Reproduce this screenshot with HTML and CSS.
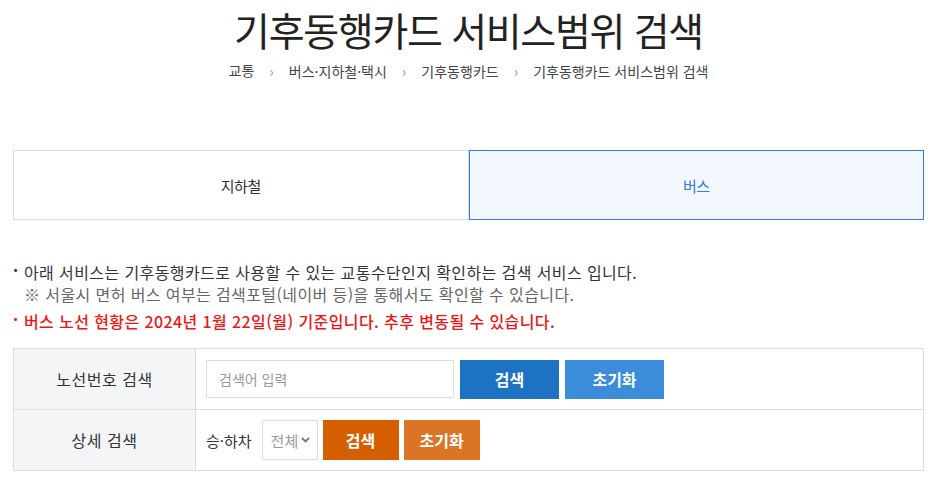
FILE: index.html
```html
<!DOCTYPE html>
<html lang="ko">
<head>
<meta charset="UTF-8">
<title>기후동행카드 서비스범위 검색</title>
<link rel="stylesheet" href="styles.css">
</head>
<body>

<div class="head">
  <h1>기후동행카드 서비스범위 검색</h1>
  <ol class="crumbs">
    <li>교통</li>
    <li>버스·지하철·택시</li>
    <li>기후동행카드</li>
    <li>기후동행카드 서비스범위 검색</li>
  </ol>
</div>

<div class="tabs">
  <button>지하철</button>
  <button class="active">버스</button>
</div>

<ul class="notes">
  <li>아래 서비스는 기후동행카드로 사용할 수 있는 교통수단인지 확인하는 검색 서비스 입니다.</li>
  <li class="sub">※ 서울시 면허 버스 여부는 검색포털(네이버 등)을 통해서도 확인할 수 있습니다.</li>
  <li class="warn">버스 노선 현황은 2024년 1월 22일(월) 기준입니다. 추후 변동될 수 있습니다.</li>
</ul>

<table class="search">
  <tr>
    <th>노선번호 검색</th>
    <td>
      <div class="row">
        <input type="text" placeholder="검색어 입력">
        <button class="btn blue">검색</button>
        <button class="btn sky">초기화</button>
      </div>
    </td>
  </tr>
  <tr>
    <th>상세 검색</th>
    <td>
      <div class="row">
        <span class="lbl">승·하차</span>
        <div class="sel">전체
          <svg width="9" height="6" viewBox="0 0 9 6"><path d="M1 1l3.5 3.5L8 1" fill="none" stroke="#777" stroke-width="1.8"/></svg>
        </div>
        <button class="btn orange">검색</button>
        <button class="btn amber">초기화</button>
      </div>
    </td>
  </tr>
</table>

</body>
</html>
```

FILE: styles.css
```css
body{margin:0;padding:0 13px;font-family:"Noto Sans CJK KR","Noto Sans",sans-serif;color:#333;background:#fff}
.head{text-align:center;padding-top:4px}
h1{margin:0;font-size:39px;font-weight:400;letter-spacing:-1.3px;color:#222;line-height:50px}
.crumbs{list-style:none;margin:6px 0 0;padding:0;display:flex;justify-content:center;font-size:14px;color:#444}
.crumbs li+li::before{content:"›";color:#999;margin:0 15px;font-size:15px}
.tabs{display:flex;margin-top:69px;height:70px}
.tabs button{flex:1;border:1px solid #ddd;background:#fff;font:inherit;font-size:15px;color:#333;cursor:pointer;letter-spacing:-.5px}
.tabs button+button{border-left:none}
.tabs button.active{border:1px solid #2f80e6;background:#f3f8fe;color:#2f7de0}
.notes{list-style:none;margin:40px 0 0;padding:0;font-size:16px;letter-spacing:.4px}
.notes li{padding-left:11px;position:relative;line-height:24px}
.notes li::before{content:"·";position:absolute;left:0;top:-2px;font-weight:700}
.notes li.sub{color:#666;line-height:20px}
.notes li.sub::before{content:none}
.notes li.warn{color:#f01414;margin-top:5px;font-weight:500}
.search{width:100%;border-collapse:collapse;margin-top:15px;border:1px solid #ddd}
.search th{width:181px;background:#f4f5f7;font-weight:400;font-size:16px;letter-spacing:.5px;color:#333;border:1px solid #ddd;height:60px;padding:0}
.search td{border:1px solid #ddd;padding:0 10px}
.row{display:flex;align-items:center;gap:6px}
.row input{width:248px;height:38px;box-sizing:border-box;border:1px solid #ddd;padding:0 12px;font:inherit;font-size:14px}
.row input::placeholder{color:#999}
.btn{height:39px;border:none;color:#fff;font:inherit;font-size:16px;font-weight:700;cursor:pointer}
.blue{width:99px;background:#1e72c4}
.sky{width:99px;background:#3b8cd9}
.lbl{font-size:15px;color:#333;margin-right:4px}
.sel{height:40px;box-sizing:border-box;width:56px;border:1px solid #ddd;display:flex;align-items:center;gap:3px;padding-left:8px;font-size:15px;color:#999}
.orange{width:76px;height:40px;background:#d55f00;margin-left:-1px}
.amber{width:76px;height:40px;background:#db7425;margin-left:-1px}
```
